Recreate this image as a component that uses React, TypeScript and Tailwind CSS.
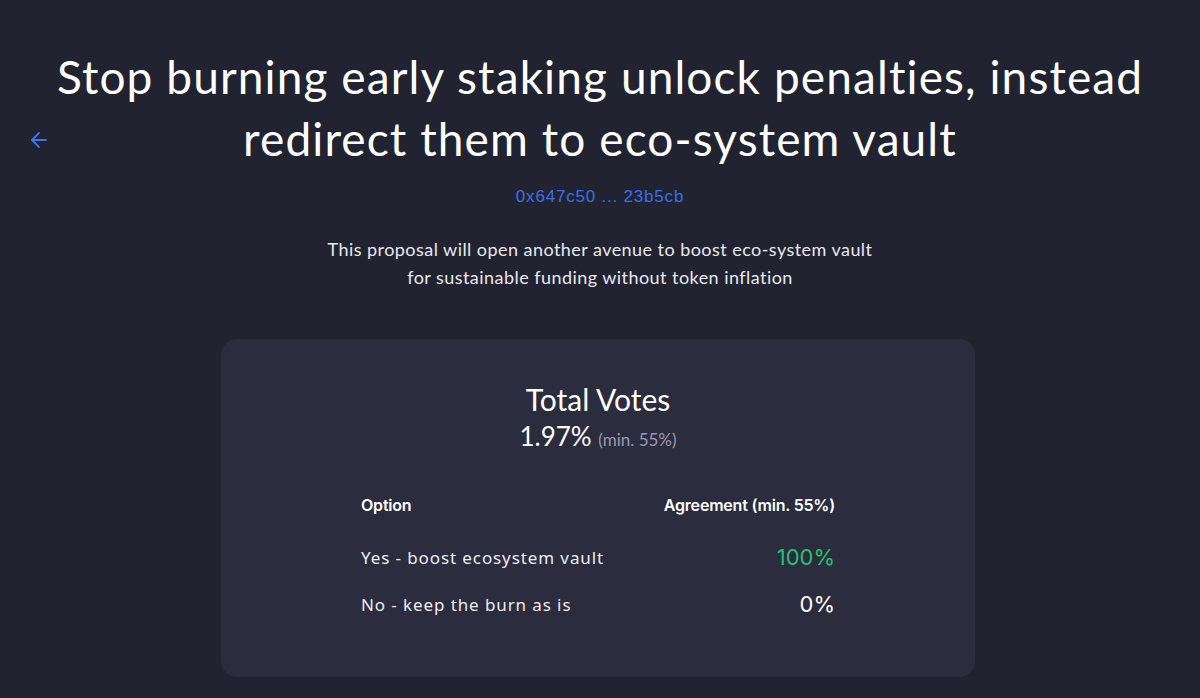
import { ArrowLeft } from "lucide-react";

const options = [
  { name: "Yes - boost ecosystem vault", value: "100%", win: true },
  { name: "No - keep the burn as is", value: "0%", win: false },
];

export default function App() {
  return (
    <div className="min-h-[698px] bg-[#222331] text-white font-['Lato','Noto_Sans',sans-serif] overflow-hidden">
      <div className="relative pt-[46px]">
        <button className="absolute left-[27px] top-[128px] text-[#3f74ee]">
          <ArrowLeft className="w-[24px] h-[24px]" strokeWidth={1.8} />
        </button>
        <h1 className="mx-auto max-w-[1140px] text-center text-[46px] leading-[62px] tracking-[1.1px] text-white">
          Stop burning early staking unlock penalties, instead redirect them to eco-system vault
        </h1>
        <div className="mt-[14px] text-center text-[17px] tracking-[0.8px] text-[#3b6ee8] font-['Liberation_Sans',sans-serif]">
          0x647c50 ... 23b5cb
        </div>
        <p className="mx-auto mt-[25px] max-w-[560px] text-center text-[18px] leading-[28px] tracking-[0.45px] text-[#e8e8ee]">
          This proposal will open another avenue to boost eco-system vault for sustainable funding without token inflation
        </p>
      </div>

      <div className="mx-auto mt-[48px] w-[754px] -translate-x-[2px] rounded-[16px] bg-[#2b2c3e] pt-[42px] pb-[60px]">
        <div className="text-center">
          <div className="text-[30px] leading-[36px] text-white">Total Votes</div>
          <div className="mt-[2px] text-[26px] leading-[34px] text-white">
            1.97% <span className="text-[17px] text-[#9a9bb0]">(min. 55%)</span>
          </div>
        </div>
        <div className="mx-auto mt-[36px] w-[474px] font-['Inter',sans-serif]">
          <div className="flex justify-between text-[16px] font-semibold tracking-[-0.2px] text-white">
            <span>Option</span>
            <span>Agreement (min. 55%)</span>
          </div>
          <div className="mt-[28px] flex flex-col gap-[22px]">
            {options.map((o) => (
              <div key={o.name} className="flex justify-between items-center">
                <span className="text-[17px] leading-[25px] text-[#ececf2] font-['Noto_Sans',sans-serif] tracking-[0.9px]">
                  {o.name}
                </span>
                <span className={`text-[22px] leading-[25px] ${o.win ? "text-[#22c36f]" : "text-white"}`}>
                  {o.value}
                </span>
              </div>
            ))}
          </div>
        </div>
      </div>
    </div>
  );
}
